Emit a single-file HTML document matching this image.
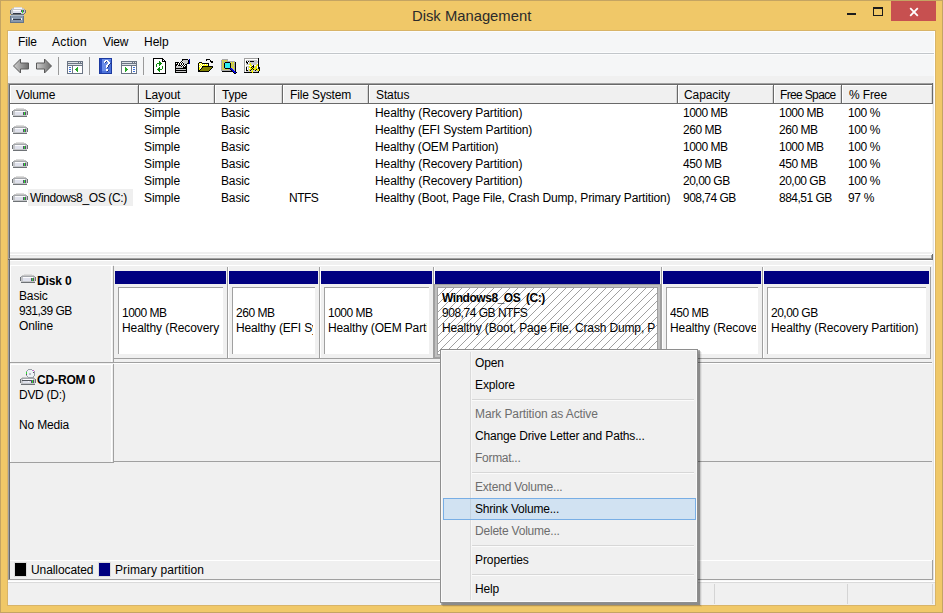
<!DOCTYPE html>
<html><head><meta charset="utf-8">
<style>
*{margin:0;padding:0;box-sizing:border-box}
html,body{width:943px;height:613px;overflow:hidden;background:#f0c868}
body{position:relative;font-family:"Liberation Sans",sans-serif;font-size:12px;letter-spacing:-0.15px;color:#000}
.a{position:absolute}
.t{position:absolute;white-space:nowrap;line-height:15px}
svg{position:absolute;overflow:visible}
</style></head><body>
<div class="a" style="left:0px;top:0px;width:943px;height:1px;background:#c4a462;"></div><div class="a" style="left:0px;top:0px;width:1px;height:613px;background:#c4a462;"></div><div class="a" style="left:942px;top:0px;width:1px;height:613px;background:#c4a462;"></div><div class="a" style="left:0px;top:612px;width:943px;height:1px;background:#c4a462;"></div><svg style="left:10px;top:7px" width="16" height="16" shape-rendering="crispEdges"><rect x="4" y="0" width="8" height="1" fill="#dcdcdc"/><rect x="2" y="1" width="2" height="1" fill="#c6c6c6"/><rect x="4" y="1" width="8" height="1" fill="#fbfbfd"/><rect x="12" y="1" width="2" height="1" fill="#c6c6c6"/><rect x="1" y="2" width="1" height="1" fill="#a4a7ab"/><rect x="2" y="2" width="12" height="1" fill="#c4c6c9"/><rect x="14" y="2" width="1" height="1" fill="#a4a7ab"/><rect x="0" y="3" width="1" height="1" fill="#6e7276"/><rect x="1" y="3" width="2" height="1" fill="#c4c6c9"/><rect x="3" y="3" width="8" height="1" fill="#fbfbfd"/><rect x="11" y="3" width="1" height="1" fill="#5a4a6e"/><rect x="12" y="3" width="1" height="1" fill="#30e030"/><rect x="13" y="3" width="1" height="1" fill="#5a4a6e"/><rect x="14" y="3" width="1" height="1" fill="#c4c6c9"/><rect x="15" y="3" width="1" height="1" fill="#6e7276"/><rect x="0" y="4" width="1" height="1" fill="#6e7276"/><rect x="1" y="4" width="2" height="1" fill="#c4c6c9"/><rect x="3" y="4" width="8" height="1" fill="#dfe1ec"/><rect x="11" y="4" width="1" height="1" fill="#5a4a6e"/><rect x="12" y="4" width="1" height="1" fill="#30e030"/><rect x="13" y="4" width="1" height="1" fill="#5a4a6e"/><rect x="14" y="4" width="1" height="1" fill="#c4c6c9"/><rect x="15" y="4" width="1" height="1" fill="#6e7276"/><rect x="0" y="5" width="1" height="1" fill="#6e7276"/><rect x="1" y="5" width="2" height="1" fill="#c4c6c9"/><rect x="3" y="5" width="9" height="1" fill="#dfe1ec"/><rect x="12" y="5" width="1" height="1" fill="#30e030"/><rect x="13" y="5" width="2" height="1" fill="#c4c6c9"/><rect x="15" y="5" width="1" height="1" fill="#6e7276"/><rect x="0" y="6" width="1" height="1" fill="#6e7276"/><rect x="1" y="6" width="2" height="1" fill="#c4c6c9"/><rect x="3" y="6" width="8" height="1" fill="#303848"/><rect x="11" y="6" width="3" height="1" fill="#c4c6c9"/><rect x="14" y="6" width="1" height="1" fill="#6e7276"/><rect x="1" y="7" width="13" height="1" fill="#6e7276"/><rect x="0" y="8" width="14" height="1" fill="#b0bccb"/><rect x="0" y="9" width="1" height="1" fill="#62748a"/><rect x="1" y="9" width="12" height="1" fill="#8898ac"/><rect x="13" y="9" width="1" height="1" fill="#62748a"/><rect x="0" y="10" width="1" height="1" fill="#62748a"/><rect x="1" y="10" width="12" height="1" fill="#8898ac"/><rect x="13" y="10" width="1" height="1" fill="#62748a"/><rect x="0" y="11" width="1" height="1" fill="#62748a"/><rect x="1" y="11" width="1" height="1" fill="#8898ac"/><rect x="2" y="11" width="1" height="1" fill="#f0f4f8"/><rect x="3" y="11" width="8" height="1" fill="#8898ac"/><rect x="11" y="11" width="1" height="1" fill="#f0f4f8"/><rect x="12" y="11" width="1" height="1" fill="#8898ac"/><rect x="13" y="11" width="1" height="1" fill="#62748a"/><rect x="0" y="12" width="1" height="1" fill="#62748a"/><rect x="1" y="12" width="1" height="1" fill="#8898ac"/><rect x="2" y="12" width="1" height="1" fill="#f0f4f8"/><rect x="3" y="12" width="8" height="1" fill="#303848"/><rect x="11" y="12" width="1" height="1" fill="#f0f4f8"/><rect x="12" y="12" width="1" height="1" fill="#8898ac"/><rect x="13" y="12" width="1" height="1" fill="#62748a"/><rect x="0" y="13" width="1" height="1" fill="#62748a"/><rect x="1" y="13" width="12" height="1" fill="#8898ac"/><rect x="13" y="13" width="1" height="1" fill="#62748a"/><rect x="0" y="14" width="1" height="1" fill="#62748a"/><rect x="1" y="14" width="12" height="1" fill="#8898ac"/><rect x="13" y="14" width="1" height="1" fill="#62748a"/><rect x="0" y="15" width="14" height="1" fill="#62748a"/></svg><div class="t" style="left:412px;top:7px;font-size:14.8px;line-height:18px;color:#2b2b2b;letter-spacing:0">Disk Management</div><div class="a" style="left:891px;top:1px;width:45px;height:20px;background:#c75050;"></div><svg style="left:909px;top:7px" width="10" height="10"><path d="M1.2 1.2L8.8 8.8M8.8 1.2L1.2 8.8" stroke="#fff" stroke-width="1.8"/></svg><div class="a" style="left:847px;top:13px;width:9px;height:2px;background:#1c1c1c;"></div><div class="a" style="left:873px;top:7px;width:10px;height:9px;border:1px solid #1c1c1c;border-top-width:2px"></div><div class="a" style="left:7px;top:30px;width:929px;height:576px;background:#d8b468;"></div><div class="a" style="left:8px;top:31px;width:927px;height:574px;background:#f0f0f0;"></div><div class="a" style="left:8px;top:31px;width:927px;height:45px;background:#f5f6f7;"></div><div class="a" style="left:8px;top:31px;width:927px;height:1px;background:#fbfcfd;"></div><div class="a" style="left:8px;top:31px;width:1px;height:45px;background:#fbfcfd;"></div><div class="a" style="left:8px;top:52px;width:927px;height:1px;background:#fbfcfd;"></div><div class="a" style="left:8px;top:53px;width:927px;height:1px;background:#c2c6ca;"></div><div class="a" style="left:8px;top:54px;width:927px;height:1px;background:#fbfcfd;"></div><div class="t" style="left:18px;top:35px;letter-spacing:-0.1px">File</div><div class="t" style="left:52px;top:35px;letter-spacing:0.25px">Action</div><div class="t" style="left:103px;top:35px;letter-spacing:-0.1px">View</div><div class="t" style="left:144px;top:35px;letter-spacing:0px">Help</div><svg style="left:12px;top:58px" width="18" height="17"><defs><linearGradient id="ag" x1="0" y1="0" x2="1" y2="0"><stop offset="0" stop-color="#d0d0d0"/><stop offset="1" stop-color="#6a6a6a"/></linearGradient></defs><path d="M1.5 8 L8.5 1 V5 H16.5 V11 H8.5 V15 Z" fill="url(#ag)" stroke="#5a5a5a" stroke-linejoin="round"/></svg><svg style="left:35px;top:58px" width="18" height="17"><path d="M16.5 8 L9.5 1 V5 H1.5 V11 H9.5 V15 Z" fill="url(#ag)" stroke="#5a5a5a" stroke-linejoin="round"/></svg><div class="a" style="left:58px;top:57px;width:1px;height:18px;background:#9a9a9a;"></div><div class="a" style="left:89px;top:57px;width:1px;height:18px;background:#9a9a9a;"></div><div class="a" style="left:143px;top:57px;width:1px;height:18px;background:#9a9a9a;"></div><svg style="left:67px;top:61px" width="16" height="13" shape-rendering="crispEdges"><rect x="0" y="0" width="16" height="1" fill="#6b7584"/><rect x="0" y="1" width="1" height="1" fill="#6b7584"/><rect x="1" y="1" width="10" height="1" fill="#dde1e6"/><rect x="11" y="1" width="1" height="1" fill="#6b7584"/><rect x="12" y="1" width="1" height="1" fill="#dde1e6"/><rect x="13" y="1" width="1" height="1" fill="#6b7584"/><rect x="14" y="1" width="1" height="1" fill="#dde1e6"/><rect x="15" y="1" width="1" height="1" fill="#6b7584"/><rect x="0" y="2" width="16" height="1" fill="#6b7584"/><rect x="0" y="3" width="1" height="1" fill="#6b7584"/><rect x="1" y="3" width="14" height="1" fill="#dde1e6"/><rect x="15" y="3" width="1" height="1" fill="#6b7584"/><rect x="0" y="4" width="16" height="1" fill="#6b7584"/><rect x="0" y="5" width="1" height="1" fill="#6b7584"/><rect x="1" y="5" width="4" height="1" fill="#ffffff"/><rect x="5" y="5" width="1" height="1" fill="#6b7584"/><rect x="6" y="5" width="9" height="1" fill="#ffffff"/><rect x="15" y="5" width="1" height="1" fill="#6b7584"/><rect x="0" y="6" width="1" height="1" fill="#6b7584"/><rect x="1" y="6" width="1" height="1" fill="#ffffff"/><rect x="2" y="6" width="2" height="1" fill="#3a6fd8"/><rect x="4" y="6" width="1" height="1" fill="#ffffff"/><rect x="5" y="6" width="1" height="1" fill="#6b7584"/><rect x="6" y="6" width="4" height="1" fill="#ffffff"/><rect x="10" y="6" width="1" height="1" fill="#28a828"/><rect x="11" y="6" width="4" height="1" fill="#ffffff"/><rect x="15" y="6" width="1" height="1" fill="#6b7584"/><rect x="0" y="7" width="1" height="1" fill="#6b7584"/><rect x="1" y="7" width="4" height="1" fill="#ffffff"/><rect x="5" y="7" width="1" height="1" fill="#6b7584"/><rect x="6" y="7" width="3" height="1" fill="#ffffff"/><rect x="9" y="7" width="2" height="1" fill="#28a828"/><rect x="11" y="7" width="4" height="1" fill="#ffffff"/><rect x="15" y="7" width="1" height="1" fill="#6b7584"/><rect x="0" y="8" width="1" height="1" fill="#6b7584"/><rect x="1" y="8" width="1" height="1" fill="#ffffff"/><rect x="2" y="8" width="2" height="1" fill="#3a6fd8"/><rect x="4" y="8" width="1" height="1" fill="#ffffff"/><rect x="5" y="8" width="1" height="1" fill="#6b7584"/><rect x="6" y="8" width="2" height="1" fill="#ffffff"/><rect x="8" y="8" width="3" height="1" fill="#28a828"/><rect x="11" y="8" width="4" height="1" fill="#ffffff"/><rect x="15" y="8" width="1" height="1" fill="#6b7584"/><rect x="0" y="9" width="1" height="1" fill="#6b7584"/><rect x="1" y="9" width="4" height="1" fill="#ffffff"/><rect x="5" y="9" width="1" height="1" fill="#6b7584"/><rect x="6" y="9" width="3" height="1" fill="#ffffff"/><rect x="9" y="9" width="2" height="1" fill="#28a828"/><rect x="11" y="9" width="4" height="1" fill="#ffffff"/><rect x="15" y="9" width="1" height="1" fill="#6b7584"/><rect x="0" y="10" width="1" height="1" fill="#6b7584"/><rect x="1" y="10" width="1" height="1" fill="#ffffff"/><rect x="2" y="10" width="2" height="1" fill="#3a6fd8"/><rect x="4" y="10" width="1" height="1" fill="#ffffff"/><rect x="5" y="10" width="1" height="1" fill="#6b7584"/><rect x="6" y="10" width="4" height="1" fill="#ffffff"/><rect x="10" y="10" width="1" height="1" fill="#28a828"/><rect x="11" y="10" width="4" height="1" fill="#ffffff"/><rect x="15" y="10" width="1" height="1" fill="#6b7584"/><rect x="0" y="11" width="1" height="1" fill="#6b7584"/><rect x="1" y="11" width="4" height="1" fill="#ffffff"/><rect x="5" y="11" width="1" height="1" fill="#6b7584"/><rect x="6" y="11" width="9" height="1" fill="#ffffff"/><rect x="15" y="11" width="1" height="1" fill="#6b7584"/><rect x="0" y="12" width="16" height="1" fill="#6b7584"/></svg><svg style="left:121px;top:61px" width="16" height="13" shape-rendering="crispEdges"><rect x="0" y="0" width="16" height="1" fill="#6b7584"/><rect x="0" y="1" width="1" height="1" fill="#6b7584"/><rect x="1" y="1" width="10" height="1" fill="#dde1e6"/><rect x="11" y="1" width="1" height="1" fill="#6b7584"/><rect x="12" y="1" width="1" height="1" fill="#dde1e6"/><rect x="13" y="1" width="1" height="1" fill="#6b7584"/><rect x="14" y="1" width="1" height="1" fill="#dde1e6"/><rect x="15" y="1" width="1" height="1" fill="#6b7584"/><rect x="0" y="2" width="16" height="1" fill="#6b7584"/><rect x="0" y="3" width="1" height="1" fill="#6b7584"/><rect x="1" y="3" width="14" height="1" fill="#dde1e6"/><rect x="15" y="3" width="1" height="1" fill="#6b7584"/><rect x="0" y="4" width="16" height="1" fill="#6b7584"/><rect x="0" y="5" width="1" height="1" fill="#6b7584"/><rect x="1" y="5" width="9" height="1" fill="#ffffff"/><rect x="10" y="5" width="1" height="1" fill="#6b7584"/><rect x="11" y="5" width="4" height="1" fill="#ffffff"/><rect x="15" y="5" width="1" height="1" fill="#6b7584"/><rect x="0" y="6" width="1" height="1" fill="#6b7584"/><rect x="1" y="6" width="3" height="1" fill="#ffffff"/><rect x="4" y="6" width="1" height="1" fill="#28a828"/><rect x="5" y="6" width="5" height="1" fill="#ffffff"/><rect x="10" y="6" width="1" height="1" fill="#6b7584"/><rect x="11" y="6" width="1" height="1" fill="#ffffff"/><rect x="12" y="6" width="2" height="1" fill="#3a6fd8"/><rect x="14" y="6" width="1" height="1" fill="#ffffff"/><rect x="15" y="6" width="1" height="1" fill="#6b7584"/><rect x="0" y="7" width="1" height="1" fill="#6b7584"/><rect x="1" y="7" width="3" height="1" fill="#ffffff"/><rect x="4" y="7" width="2" height="1" fill="#28a828"/><rect x="6" y="7" width="4" height="1" fill="#ffffff"/><rect x="10" y="7" width="1" height="1" fill="#6b7584"/><rect x="11" y="7" width="4" height="1" fill="#ffffff"/><rect x="15" y="7" width="1" height="1" fill="#6b7584"/><rect x="0" y="8" width="1" height="1" fill="#6b7584"/><rect x="1" y="8" width="3" height="1" fill="#ffffff"/><rect x="4" y="8" width="3" height="1" fill="#28a828"/><rect x="7" y="8" width="3" height="1" fill="#ffffff"/><rect x="10" y="8" width="1" height="1" fill="#6b7584"/><rect x="11" y="8" width="1" height="1" fill="#ffffff"/><rect x="12" y="8" width="2" height="1" fill="#3a6fd8"/><rect x="14" y="8" width="1" height="1" fill="#ffffff"/><rect x="15" y="8" width="1" height="1" fill="#6b7584"/><rect x="0" y="9" width="1" height="1" fill="#6b7584"/><rect x="1" y="9" width="3" height="1" fill="#ffffff"/><rect x="4" y="9" width="2" height="1" fill="#28a828"/><rect x="6" y="9" width="4" height="1" fill="#ffffff"/><rect x="10" y="9" width="1" height="1" fill="#6b7584"/><rect x="11" y="9" width="4" height="1" fill="#ffffff"/><rect x="15" y="9" width="1" height="1" fill="#6b7584"/><rect x="0" y="10" width="1" height="1" fill="#6b7584"/><rect x="1" y="10" width="3" height="1" fill="#ffffff"/><rect x="4" y="10" width="1" height="1" fill="#28a828"/><rect x="5" y="10" width="5" height="1" fill="#ffffff"/><rect x="10" y="10" width="1" height="1" fill="#6b7584"/><rect x="11" y="10" width="1" height="1" fill="#ffffff"/><rect x="12" y="10" width="2" height="1" fill="#3a6fd8"/><rect x="14" y="10" width="1" height="1" fill="#ffffff"/><rect x="15" y="10" width="1" height="1" fill="#6b7584"/><rect x="0" y="11" width="1" height="1" fill="#6b7584"/><rect x="1" y="11" width="9" height="1" fill="#ffffff"/><rect x="10" y="11" width="1" height="1" fill="#6b7584"/><rect x="11" y="11" width="4" height="1" fill="#ffffff"/><rect x="15" y="11" width="1" height="1" fill="#6b7584"/><rect x="0" y="12" width="16" height="1" fill="#6b7584"/></svg><svg style="left:99px;top:58px" width="13" height="16" shape-rendering="crispEdges"><rect x="0" y="0" width="13" height="1" fill="#1c3aa0"/><rect x="0" y="1" width="1" height="1" fill="#1c3aa0"/><rect x="1" y="1" width="2" height="1" fill="#2a4cc0"/><rect x="3" y="1" width="9" height="1" fill="#6c8ee8"/><rect x="12" y="1" width="1" height="1" fill="#1c3aa0"/><rect x="0" y="2" width="1" height="1" fill="#1c3aa0"/><rect x="1" y="2" width="2" height="1" fill="#2a4cc0"/><rect x="3" y="2" width="3" height="1" fill="#6c8ee8"/><rect x="6" y="2" width="3" height="1" fill="#ffffff"/><rect x="9" y="2" width="2" height="1" fill="#6c8ee8"/><rect x="11" y="2" width="1" height="1" fill="#4c72da"/><rect x="12" y="2" width="1" height="1" fill="#1c3aa0"/><rect x="0" y="3" width="1" height="1" fill="#1c3aa0"/><rect x="1" y="3" width="2" height="1" fill="#2a4cc0"/><rect x="3" y="3" width="2" height="1" fill="#6c8ee8"/><rect x="5" y="3" width="2" height="1" fill="#ffffff"/><rect x="7" y="3" width="1" height="1" fill="#2a3a78"/><rect x="8" y="3" width="2" height="1" fill="#ffffff"/><rect x="10" y="3" width="1" height="1" fill="#6c8ee8"/><rect x="11" y="3" width="1" height="1" fill="#4c72da"/><rect x="12" y="3" width="1" height="1" fill="#1c3aa0"/><rect x="0" y="4" width="1" height="1" fill="#1c3aa0"/><rect x="1" y="4" width="2" height="1" fill="#2a4cc0"/><rect x="3" y="4" width="2" height="1" fill="#6c8ee8"/><rect x="5" y="4" width="1" height="1" fill="#ffffff"/><rect x="6" y="4" width="1" height="1" fill="#2a3a78"/><rect x="7" y="4" width="2" height="1" fill="#6c8ee8"/><rect x="9" y="4" width="2" height="1" fill="#ffffff"/><rect x="11" y="4" width="1" height="1" fill="#4c72da"/><rect x="12" y="4" width="1" height="1" fill="#1c3aa0"/><rect x="0" y="5" width="1" height="1" fill="#1c3aa0"/><rect x="1" y="5" width="2" height="1" fill="#2a4cc0"/><rect x="3" y="5" width="6" height="1" fill="#6c8ee8"/><rect x="9" y="5" width="2" height="1" fill="#ffffff"/><rect x="11" y="5" width="1" height="1" fill="#2a3a78"/><rect x="12" y="5" width="1" height="1" fill="#1c3aa0"/><rect x="0" y="6" width="1" height="1" fill="#1c3aa0"/><rect x="1" y="6" width="2" height="1" fill="#2a4cc0"/><rect x="3" y="6" width="5" height="1" fill="#6c8ee8"/><rect x="8" y="6" width="2" height="1" fill="#ffffff"/><rect x="10" y="6" width="1" height="1" fill="#2a3a78"/><rect x="11" y="6" width="1" height="1" fill="#4c72da"/><rect x="12" y="6" width="1" height="1" fill="#1c3aa0"/><rect x="0" y="7" width="1" height="1" fill="#1c3aa0"/><rect x="1" y="7" width="2" height="1" fill="#2a4cc0"/><rect x="3" y="7" width="4" height="1" fill="#6c8ee8"/><rect x="7" y="7" width="2" height="1" fill="#ffffff"/><rect x="9" y="7" width="1" height="1" fill="#2a3a78"/><rect x="10" y="7" width="2" height="1" fill="#4c72da"/><rect x="12" y="7" width="1" height="1" fill="#1c3aa0"/><rect x="0" y="8" width="1" height="1" fill="#1c3aa0"/><rect x="1" y="8" width="2" height="1" fill="#2a4cc0"/><rect x="3" y="8" width="4" height="1" fill="#6c8ee8"/><rect x="7" y="8" width="2" height="1" fill="#ffffff"/><rect x="9" y="8" width="1" height="1" fill="#2a3a78"/><rect x="10" y="8" width="2" height="1" fill="#4c72da"/><rect x="12" y="8" width="1" height="1" fill="#1c3aa0"/><rect x="0" y="9" width="1" height="1" fill="#1c3aa0"/><rect x="1" y="9" width="2" height="1" fill="#2a4cc0"/><rect x="3" y="9" width="4" height="1" fill="#6c8ee8"/><rect x="7" y="9" width="1" height="1" fill="#ffffff"/><rect x="8" y="9" width="1" height="1" fill="#2a3a78"/><rect x="9" y="9" width="3" height="1" fill="#4c72da"/><rect x="12" y="9" width="1" height="1" fill="#1c3aa0"/><rect x="0" y="10" width="1" height="1" fill="#1c3aa0"/><rect x="1" y="10" width="2" height="1" fill="#2a4cc0"/><rect x="3" y="10" width="5" height="1" fill="#6c8ee8"/><rect x="8" y="10" width="4" height="1" fill="#4c72da"/><rect x="12" y="10" width="1" height="1" fill="#1c3aa0"/><rect x="0" y="11" width="1" height="1" fill="#1c3aa0"/><rect x="1" y="11" width="2" height="1" fill="#2a4cc0"/><rect x="3" y="11" width="4" height="1" fill="#6c8ee8"/><rect x="7" y="11" width="2" height="1" fill="#ffffff"/><rect x="9" y="11" width="3" height="1" fill="#4c72da"/><rect x="12" y="11" width="1" height="1" fill="#1c3aa0"/><rect x="0" y="12" width="1" height="1" fill="#1c3aa0"/><rect x="1" y="12" width="2" height="1" fill="#2a4cc0"/><rect x="3" y="12" width="4" height="1" fill="#6c8ee8"/><rect x="7" y="12" width="2" height="1" fill="#ffffff"/><rect x="9" y="12" width="1" height="1" fill="#2a3a78"/><rect x="10" y="12" width="2" height="1" fill="#4c72da"/><rect x="12" y="12" width="1" height="1" fill="#1c3aa0"/><rect x="0" y="13" width="1" height="1" fill="#1c3aa0"/><rect x="1" y="13" width="2" height="1" fill="#2a4cc0"/><rect x="3" y="13" width="5" height="1" fill="#4c72da"/><rect x="8" y="13" width="1" height="1" fill="#2a3a78"/><rect x="9" y="13" width="3" height="1" fill="#4c72da"/><rect x="12" y="13" width="1" height="1" fill="#1c3aa0"/><rect x="0" y="14" width="1" height="1" fill="#1c3aa0"/><rect x="1" y="14" width="2" height="1" fill="#2a4cc0"/><rect x="3" y="14" width="9" height="1" fill="#4c72da"/><rect x="12" y="14" width="1" height="1" fill="#1c3aa0"/><rect x="0" y="15" width="13" height="1" fill="#1c3aa0"/></svg><svg style="left:153px;top:58px" width="13" height="16" shape-rendering="crispEdges"><rect x="0" y="0" width="10" height="1" fill="#000"/><rect x="0" y="1" width="1" height="1" fill="#000"/><rect x="1" y="1" width="8" height="1" fill="#fff"/><rect x="9" y="1" width="2" height="1" fill="#000"/><rect x="0" y="2" width="1" height="1" fill="#000"/><rect x="1" y="2" width="8" height="1" fill="#fff"/><rect x="9" y="2" width="1" height="1" fill="#000"/><rect x="10" y="2" width="1" height="1" fill="#fff"/><rect x="11" y="2" width="1" height="1" fill="#000"/><rect x="0" y="3" width="1" height="1" fill="#000"/><rect x="1" y="3" width="5" height="1" fill="#fff"/><rect x="6" y="3" width="1" height="1" fill="#0a8a0a"/><rect x="7" y="3" width="2" height="1" fill="#fff"/><rect x="9" y="3" width="4" height="1" fill="#000"/><rect x="0" y="4" width="1" height="1" fill="#000"/><rect x="1" y="4" width="5" height="1" fill="#fff"/><rect x="6" y="4" width="2" height="1" fill="#0a8a0a"/><rect x="8" y="4" width="4" height="1" fill="#fff"/><rect x="12" y="4" width="1" height="1" fill="#000"/><rect x="0" y="5" width="1" height="1" fill="#000"/><rect x="1" y="5" width="3" height="1" fill="#fff"/><rect x="4" y="5" width="5" height="1" fill="#0a8a0a"/><rect x="9" y="5" width="3" height="1" fill="#fff"/><rect x="12" y="5" width="1" height="1" fill="#000"/><rect x="0" y="6" width="1" height="1" fill="#000"/><rect x="1" y="6" width="2" height="1" fill="#fff"/><rect x="3" y="6" width="1" height="1" fill="#0a8a0a"/><rect x="4" y="6" width="2" height="1" fill="#fff"/><rect x="6" y="6" width="2" height="1" fill="#0a8a0a"/><rect x="8" y="6" width="4" height="1" fill="#fff"/><rect x="12" y="6" width="1" height="1" fill="#000"/><rect x="0" y="7" width="1" height="1" fill="#000"/><rect x="1" y="7" width="2" height="1" fill="#fff"/><rect x="3" y="7" width="1" height="1" fill="#0a8a0a"/><rect x="4" y="7" width="2" height="1" fill="#fff"/><rect x="6" y="7" width="1" height="1" fill="#0a8a0a"/><rect x="7" y="7" width="5" height="1" fill="#fff"/><rect x="12" y="7" width="1" height="1" fill="#000"/><rect x="0" y="8" width="1" height="1" fill="#000"/><rect x="1" y="8" width="2" height="1" fill="#fff"/><rect x="3" y="8" width="1" height="1" fill="#0a8a0a"/><rect x="4" y="8" width="5" height="1" fill="#fff"/><rect x="9" y="8" width="1" height="1" fill="#0a8a0a"/><rect x="10" y="8" width="2" height="1" fill="#fff"/><rect x="12" y="8" width="1" height="1" fill="#000"/><rect x="0" y="9" width="1" height="1" fill="#000"/><rect x="1" y="9" width="5" height="1" fill="#fff"/><rect x="6" y="9" width="1" height="1" fill="#0a8a0a"/><rect x="7" y="9" width="2" height="1" fill="#fff"/><rect x="9" y="9" width="1" height="1" fill="#0a8a0a"/><rect x="10" y="9" width="2" height="1" fill="#fff"/><rect x="12" y="9" width="1" height="1" fill="#000"/><rect x="0" y="10" width="1" height="1" fill="#000"/><rect x="1" y="10" width="4" height="1" fill="#fff"/><rect x="5" y="10" width="2" height="1" fill="#0a8a0a"/><rect x="7" y="10" width="2" height="1" fill="#fff"/><rect x="9" y="10" width="1" height="1" fill="#0a8a0a"/><rect x="10" y="10" width="2" height="1" fill="#fff"/><rect x="12" y="10" width="1" height="1" fill="#000"/><rect x="0" y="11" width="1" height="1" fill="#000"/><rect x="1" y="11" width="3" height="1" fill="#fff"/><rect x="4" y="11" width="5" height="1" fill="#0a8a0a"/><rect x="9" y="11" width="3" height="1" fill="#fff"/><rect x="12" y="11" width="1" height="1" fill="#000"/><rect x="0" y="12" width="1" height="1" fill="#000"/><rect x="1" y="12" width="4" height="1" fill="#fff"/><rect x="5" y="12" width="2" height="1" fill="#0a8a0a"/><rect x="7" y="12" width="5" height="1" fill="#fff"/><rect x="12" y="12" width="1" height="1" fill="#000"/><rect x="0" y="13" width="1" height="1" fill="#000"/><rect x="1" y="13" width="5" height="1" fill="#fff"/><rect x="6" y="13" width="1" height="1" fill="#0a8a0a"/><rect x="7" y="13" width="5" height="1" fill="#fff"/><rect x="12" y="13" width="1" height="1" fill="#000"/><rect x="0" y="14" width="1" height="1" fill="#000"/><rect x="1" y="14" width="11" height="1" fill="#fff"/><rect x="12" y="14" width="1" height="1" fill="#000"/><rect x="0" y="15" width="13" height="1" fill="#000"/></svg><svg style="left:175px;top:59px" width="15" height="14" shape-rendering="crispEdges"><rect x="7" y="0" width="6" height="1" fill="#000"/><rect x="14" y="0" width="1" height="1" fill="#0000a0"/><rect x="6" y="1" width="1" height="1" fill="#fff"/><rect x="7" y="1" width="1" height="1" fill="#000"/><rect x="8" y="1" width="5" height="1" fill="#c8c8c8"/><rect x="13" y="1" width="1" height="1" fill="#000"/><rect x="14" y="1" width="1" height="1" fill="#0000a0"/><rect x="5" y="2" width="1" height="1" fill="#fff"/><rect x="6" y="2" width="1" height="1" fill="#000"/><rect x="7" y="2" width="1" height="1" fill="#fff"/><rect x="8" y="2" width="5" height="1" fill="#c8c8c8"/><rect x="13" y="2" width="1" height="1" fill="#000"/><rect x="14" y="2" width="1" height="1" fill="#0000a0"/><rect x="0" y="3" width="4" height="1" fill="#000"/><rect x="4" y="3" width="1" height="1" fill="#fff"/><rect x="5" y="3" width="1" height="1" fill="#000"/><rect x="6" y="3" width="1" height="1" fill="#fff"/><rect x="7" y="3" width="1" height="1" fill="#000"/><rect x="8" y="3" width="1" height="1" fill="#fff"/><rect x="9" y="3" width="4" height="1" fill="#c8c8c8"/><rect x="13" y="3" width="1" height="1" fill="#000"/><rect x="14" y="3" width="1" height="1" fill="#0000a0"/><rect x="0" y="4" width="1" height="1" fill="#000"/><rect x="1" y="4" width="1" height="1" fill="#fff"/><rect x="2" y="4" width="1" height="1" fill="#000"/><rect x="3" y="4" width="1" height="1" fill="#fff"/><rect x="4" y="4" width="1" height="1" fill="#000"/><rect x="5" y="4" width="1" height="1" fill="#fff"/><rect x="6" y="4" width="1" height="1" fill="#000"/><rect x="7" y="4" width="1" height="1" fill="#fff"/><rect x="8" y="4" width="1" height="1" fill="#000"/><rect x="9" y="4" width="3" height="1" fill="#c8c8c8"/><rect x="12" y="4" width="2" height="1" fill="#000"/><rect x="14" y="4" width="1" height="1" fill="#0000a0"/><rect x="0" y="5" width="3" height="1" fill="#000"/><rect x="3" y="5" width="1" height="1" fill="#fff"/><rect x="4" y="5" width="1" height="1" fill="#000"/><rect x="5" y="5" width="1" height="1" fill="#fff"/><rect x="6" y="5" width="1" height="1" fill="#000"/><rect x="7" y="5" width="1" height="1" fill="#fff"/><rect x="8" y="5" width="1" height="1" fill="#000"/><rect x="9" y="5" width="1" height="1" fill="#fff"/><rect x="10" y="5" width="2" height="1" fill="#000"/><rect x="0" y="6" width="2" height="1" fill="#000"/><rect x="2" y="6" width="1" height="1" fill="#fff"/><rect x="3" y="6" width="3" height="1" fill="#000"/><rect x="6" y="6" width="1" height="1" fill="#fff"/><rect x="7" y="6" width="1" height="1" fill="#000"/><rect x="8" y="6" width="1" height="1" fill="#fff"/><rect x="9" y="6" width="1" height="1" fill="#000"/><rect x="10" y="6" width="1" height="1" fill="#fff"/><rect x="11" y="6" width="1" height="1" fill="#000"/><rect x="0" y="7" width="1" height="1" fill="#000"/><rect x="1" y="7" width="5" height="1" fill="#c8c8c8"/><rect x="6" y="7" width="1" height="1" fill="#000"/><rect x="7" y="7" width="1" height="1" fill="#fff"/><rect x="8" y="7" width="1" height="1" fill="#000"/><rect x="9" y="7" width="1" height="1" fill="#fff"/><rect x="10" y="7" width="2" height="1" fill="#000"/><rect x="0" y="8" width="1" height="1" fill="#000"/><rect x="1" y="8" width="7" height="1" fill="#c8c8c8"/><rect x="8" y="8" width="4" height="1" fill="#000"/><rect x="0" y="9" width="12" height="1" fill="#000"/><rect x="0" y="10" width="1" height="1" fill="#000"/><rect x="1" y="10" width="10" height="1" fill="#c8c8c8"/><rect x="11" y="10" width="1" height="1" fill="#000"/><rect x="0" y="11" width="12" height="1" fill="#000"/><rect x="0" y="12" width="1" height="1" fill="#000"/><rect x="1" y="12" width="10" height="1" fill="#c8c8c8"/><rect x="11" y="12" width="1" height="1" fill="#000"/><rect x="0" y="13" width="12" height="1" fill="#000"/></svg><svg style="left:198px;top:59px" width="16" height="13" shape-rendering="crispEdges"><rect x="8" y="0" width="4" height="1" fill="#000"/><rect x="8" y="1" width="1" height="1" fill="#000"/><rect x="12" y="1" width="1" height="1" fill="#000"/><rect x="12" y="2" width="3" height="1" fill="#000"/><rect x="1" y="3" width="3" height="1" fill="#000"/><rect x="13" y="3" width="2" height="1" fill="#000"/><rect x="0" y="4" width="1" height="1" fill="#000"/><rect x="1" y="4" width="1" height="1" fill="#ffff00"/><rect x="2" y="4" width="1" height="1" fill="#ffffff"/><rect x="3" y="4" width="1" height="1" fill="#ffff00"/><rect x="4" y="4" width="7" height="1" fill="#000"/><rect x="0" y="5" width="1" height="1" fill="#000"/><rect x="1" y="5" width="1" height="1" fill="#ffffff"/><rect x="2" y="5" width="1" height="1" fill="#ffff00"/><rect x="3" y="5" width="1" height="1" fill="#ffffff"/><rect x="4" y="5" width="1" height="1" fill="#ffff00"/><rect x="5" y="5" width="1" height="1" fill="#ffffff"/><rect x="6" y="5" width="1" height="1" fill="#ffff00"/><rect x="7" y="5" width="1" height="1" fill="#ffffff"/><rect x="8" y="5" width="1" height="1" fill="#ffff00"/><rect x="9" y="5" width="1" height="1" fill="#ffffff"/><rect x="10" y="5" width="1" height="1" fill="#000"/><rect x="0" y="6" width="1" height="1" fill="#000"/><rect x="1" y="6" width="1" height="1" fill="#ffff00"/><rect x="2" y="6" width="1" height="1" fill="#ffffff"/><rect x="3" y="6" width="1" height="1" fill="#ffff00"/><rect x="4" y="6" width="1" height="1" fill="#ffffff"/><rect x="5" y="6" width="5" height="1" fill="#ffff00"/><rect x="10" y="6" width="1" height="1" fill="#000"/><rect x="0" y="7" width="1" height="1" fill="#000"/><rect x="1" y="7" width="1" height="1" fill="#ffffff"/><rect x="2" y="7" width="1" height="1" fill="#ffff00"/><rect x="3" y="7" width="1" height="1" fill="#ffffff"/><rect x="4" y="7" width="11" height="1" fill="#000"/><rect x="0" y="8" width="1" height="1" fill="#000"/><rect x="1" y="8" width="1" height="1" fill="#ffff00"/><rect x="2" y="8" width="1" height="1" fill="#ffffff"/><rect x="3" y="8" width="1" height="1" fill="#ffff00"/><rect x="4" y="8" width="1" height="1" fill="#000"/><rect x="5" y="8" width="9" height="1" fill="#808000"/><rect x="14" y="8" width="1" height="1" fill="#000"/><rect x="0" y="9" width="1" height="1" fill="#000"/><rect x="1" y="9" width="1" height="1" fill="#ffff00"/><rect x="2" y="9" width="1" height="1" fill="#ffffff"/><rect x="3" y="9" width="1" height="1" fill="#000"/><rect x="4" y="9" width="9" height="1" fill="#808000"/><rect x="13" y="9" width="1" height="1" fill="#000"/><rect x="0" y="10" width="1" height="1" fill="#000"/><rect x="1" y="10" width="1" height="1" fill="#ffff00"/><rect x="2" y="10" width="1" height="1" fill="#000"/><rect x="3" y="10" width="9" height="1" fill="#808000"/><rect x="12" y="10" width="1" height="1" fill="#000"/><rect x="0" y="11" width="2" height="1" fill="#000"/><rect x="2" y="11" width="9" height="1" fill="#808000"/><rect x="11" y="11" width="1" height="1" fill="#000"/><rect x="0" y="12" width="11" height="1" fill="#000"/></svg><svg style="left:221px;top:59px" width="16" height="15" shape-rendering="crispEdges"><rect x="1" y="0" width="6" height="1" fill="#a8a8a8"/><rect x="0" y="1" width="1" height="1" fill="#a8a8a8"/><rect x="1" y="1" width="1" height="1" fill="#f0f000"/><rect x="2" y="1" width="1" height="1" fill="#a8a8a8"/><rect x="3" y="1" width="1" height="1" fill="#f0f000"/><rect x="4" y="1" width="1" height="1" fill="#a8a8a8"/><rect x="5" y="1" width="1" height="1" fill="#f0f000"/><rect x="6" y="1" width="1" height="1" fill="#a8a8a8"/><rect x="0" y="2" width="2" height="1" fill="#a8a8a8"/><rect x="2" y="2" width="1" height="1" fill="#f0f000"/><rect x="3" y="2" width="1" height="1" fill="#a8a8a8"/><rect x="4" y="2" width="1" height="1" fill="#f0f000"/><rect x="5" y="2" width="9" height="1" fill="#a8a8a8"/><rect x="0" y="3" width="1" height="1" fill="#a8a8a8"/><rect x="1" y="3" width="1" height="1" fill="#f0f000"/><rect x="2" y="3" width="2" height="1" fill="#a8a8a8"/><rect x="4" y="3" width="5" height="1" fill="#000"/><rect x="9" y="3" width="1" height="1" fill="#a8a8a8"/><rect x="10" y="3" width="1" height="1" fill="#f0f000"/><rect x="11" y="3" width="1" height="1" fill="#a8a8a8"/><rect x="12" y="3" width="1" height="1" fill="#f0f000"/><rect x="13" y="3" width="1" height="1" fill="#a8a8a8"/><rect x="14" y="3" width="1" height="1" fill="#000"/><rect x="0" y="4" width="2" height="1" fill="#a8a8a8"/><rect x="2" y="4" width="1" height="1" fill="#f0f000"/><rect x="3" y="4" width="1" height="1" fill="#000"/><rect x="4" y="4" width="5" height="1" fill="#30f0f0"/><rect x="9" y="4" width="1" height="1" fill="#000"/><rect x="10" y="4" width="1" height="1" fill="#f0f000"/><rect x="11" y="4" width="1" height="1" fill="#a8a8a8"/><rect x="12" y="4" width="1" height="1" fill="#f0f000"/><rect x="13" y="4" width="1" height="1" fill="#a8a8a8"/><rect x="14" y="4" width="1" height="1" fill="#000"/><rect x="0" y="5" width="1" height="1" fill="#a8a8a8"/><rect x="1" y="5" width="1" height="1" fill="#f0f000"/><rect x="2" y="5" width="1" height="1" fill="#a8a8a8"/><rect x="3" y="5" width="1" height="1" fill="#000"/><rect x="4" y="5" width="5" height="1" fill="#30f0f0"/><rect x="9" y="5" width="1" height="1" fill="#000"/><rect x="10" y="5" width="1" height="1" fill="#a8a8a8"/><rect x="11" y="5" width="1" height="1" fill="#f0f000"/><rect x="12" y="5" width="2" height="1" fill="#a8a8a8"/><rect x="14" y="5" width="1" height="1" fill="#000"/><rect x="0" y="6" width="2" height="1" fill="#a8a8a8"/><rect x="2" y="6" width="1" height="1" fill="#f0f000"/><rect x="3" y="6" width="1" height="1" fill="#000"/><rect x="4" y="6" width="5" height="1" fill="#30f0f0"/><rect x="9" y="6" width="1" height="1" fill="#000"/><rect x="10" y="6" width="1" height="1" fill="#f0f000"/><rect x="11" y="6" width="1" height="1" fill="#a8a8a8"/><rect x="12" y="6" width="1" height="1" fill="#f0f000"/><rect x="13" y="6" width="1" height="1" fill="#a8a8a8"/><rect x="14" y="6" width="1" height="1" fill="#000"/><rect x="0" y="7" width="1" height="1" fill="#a8a8a8"/><rect x="1" y="7" width="1" height="1" fill="#f0f000"/><rect x="2" y="7" width="1" height="1" fill="#a8a8a8"/><rect x="3" y="7" width="1" height="1" fill="#000"/><rect x="4" y="7" width="5" height="1" fill="#30f0f0"/><rect x="9" y="7" width="1" height="1" fill="#000"/><rect x="10" y="7" width="1" height="1" fill="#a8a8a8"/><rect x="11" y="7" width="1" height="1" fill="#f0f000"/><rect x="12" y="7" width="2" height="1" fill="#a8a8a8"/><rect x="14" y="7" width="1" height="1" fill="#000"/><rect x="0" y="8" width="2" height="1" fill="#a8a8a8"/><rect x="2" y="8" width="1" height="1" fill="#f0f000"/><rect x="3" y="8" width="1" height="1" fill="#000"/><rect x="4" y="8" width="5" height="1" fill="#30f0f0"/><rect x="9" y="8" width="1" height="1" fill="#000"/><rect x="10" y="8" width="1" height="1" fill="#f0f000"/><rect x="11" y="8" width="1" height="1" fill="#a8a8a8"/><rect x="12" y="8" width="1" height="1" fill="#f0f000"/><rect x="13" y="8" width="1" height="1" fill="#a8a8a8"/><rect x="14" y="8" width="1" height="1" fill="#000"/><rect x="0" y="9" width="1" height="1" fill="#a8a8a8"/><rect x="1" y="9" width="1" height="1" fill="#f0f000"/><rect x="2" y="9" width="2" height="1" fill="#a8a8a8"/><rect x="4" y="9" width="5" height="1" fill="#000"/><rect x="9" y="9" width="2" height="1" fill="#0000f0"/><rect x="11" y="9" width="1" height="1" fill="#a8a8a8"/><rect x="12" y="9" width="1" height="1" fill="#f0f000"/><rect x="13" y="9" width="1" height="1" fill="#a8a8a8"/><rect x="14" y="9" width="1" height="1" fill="#000"/><rect x="0" y="10" width="2" height="1" fill="#a8a8a8"/><rect x="2" y="10" width="1" height="1" fill="#f0f000"/><rect x="3" y="10" width="1" height="1" fill="#a8a8a8"/><rect x="4" y="10" width="1" height="1" fill="#f0f000"/><rect x="5" y="10" width="1" height="1" fill="#a8a8a8"/><rect x="6" y="10" width="1" height="1" fill="#f0f000"/><rect x="7" y="10" width="2" height="1" fill="#a8a8a8"/><rect x="9" y="10" width="1" height="1" fill="#000"/><rect x="10" y="10" width="2" height="1" fill="#0000f0"/><rect x="12" y="10" width="2" height="1" fill="#a8a8a8"/><rect x="14" y="10" width="1" height="1" fill="#000"/><rect x="0" y="11" width="10" height="1" fill="#a8a8a8"/><rect x="10" y="11" width="1" height="1" fill="#000"/><rect x="11" y="11" width="2" height="1" fill="#0000f0"/><rect x="13" y="11" width="1" height="1" fill="#a8a8a8"/><rect x="14" y="11" width="1" height="1" fill="#000"/><rect x="1" y="12" width="11" height="1" fill="#000"/><rect x="12" y="12" width="2" height="1" fill="#0000f0"/><rect x="14" y="12" width="1" height="1" fill="#000"/><rect x="12" y="13" width="1" height="1" fill="#000"/><rect x="13" y="13" width="2" height="1" fill="#0000f0"/><rect x="15" y="13" width="1" height="1" fill="#000"/><rect x="13" y="14" width="2" height="1" fill="#000"/></svg><svg style="left:244px;top:58px" width="16" height="15" shape-rendering="crispEdges"><rect x="0" y="0" width="14" height="1" fill="#a0a0a0"/><rect x="14" y="0" width="1" height="1" fill="#000"/><rect x="0" y="1" width="1" height="1" fill="#a0a0a0"/><rect x="1" y="1" width="13" height="1" fill="#fff"/><rect x="14" y="1" width="1" height="1" fill="#000"/><rect x="0" y="2" width="1" height="1" fill="#a0a0a0"/><rect x="1" y="2" width="1" height="1" fill="#fff"/><rect x="2" y="2" width="11" height="1" fill="#c8c8c8"/><rect x="13" y="2" width="1" height="1" fill="#fff"/><rect x="14" y="2" width="1" height="1" fill="#000"/><rect x="0" y="3" width="1" height="1" fill="#a0a0a0"/><rect x="1" y="3" width="1" height="1" fill="#fff"/><rect x="2" y="3" width="1" height="1" fill="#000"/><rect x="3" y="3" width="1" height="1" fill="#fff"/><rect x="4" y="3" width="1" height="1" fill="#000"/><rect x="5" y="3" width="1" height="1" fill="#c8c8c8"/><rect x="6" y="3" width="4" height="1" fill="#000"/><rect x="10" y="3" width="4" height="1" fill="#c8c8c8"/><rect x="14" y="3" width="1" height="1" fill="#000"/><rect x="0" y="4" width="1" height="1" fill="#a0a0a0"/><rect x="1" y="4" width="1" height="1" fill="#fff"/><rect x="2" y="4" width="2" height="1" fill="#000"/><rect x="4" y="4" width="1" height="1" fill="#fff"/><rect x="5" y="4" width="9" height="1" fill="#c8c8c8"/><rect x="14" y="4" width="1" height="1" fill="#000"/><rect x="0" y="5" width="1" height="1" fill="#a0a0a0"/><rect x="1" y="5" width="1" height="1" fill="#fff"/><rect x="2" y="5" width="1" height="1" fill="#c8c8c8"/><rect x="3" y="5" width="1" height="1" fill="#000"/><rect x="4" y="5" width="1" height="1" fill="#fff"/><rect x="5" y="5" width="1" height="1" fill="#c8c8c8"/><rect x="6" y="5" width="1" height="1" fill="#f0f000"/><rect x="7" y="5" width="6" height="1" fill="#c8c8c8"/><rect x="13" y="5" width="1" height="1" fill="#fff"/><rect x="14" y="5" width="1" height="1" fill="#000"/><rect x="0" y="6" width="1" height="1" fill="#a0a0a0"/><rect x="1" y="6" width="1" height="1" fill="#fff"/><rect x="2" y="6" width="3" height="1" fill="#c8c8c8"/><rect x="5" y="6" width="2" height="1" fill="#f0f000"/><rect x="7" y="6" width="6" height="1" fill="#c8c8c8"/><rect x="13" y="6" width="1" height="1" fill="#f0f000"/><rect x="14" y="6" width="1" height="1" fill="#000"/><rect x="0" y="7" width="1" height="1" fill="#a0a0a0"/><rect x="1" y="7" width="5" height="1" fill="#fff"/><rect x="6" y="7" width="2" height="1" fill="#f0f000"/><rect x="8" y="7" width="1" height="1" fill="#fff"/><rect x="9" y="7" width="1" height="1" fill="#000"/><rect x="10" y="7" width="2" height="1" fill="#fff"/><rect x="12" y="7" width="2" height="1" fill="#f0f000"/><rect x="14" y="7" width="1" height="1" fill="#000"/><rect x="0" y="8" width="1" height="1" fill="#a0a0a0"/><rect x="1" y="8" width="1" height="1" fill="#fff"/><rect x="2" y="8" width="3" height="1" fill="#c8c8c8"/><rect x="5" y="8" width="1" height="1" fill="#f0f000"/><rect x="6" y="8" width="1" height="1" fill="#fff"/><rect x="7" y="8" width="1" height="1" fill="#f0f000"/><rect x="8" y="8" width="2" height="1" fill="#000"/><rect x="10" y="8" width="1" height="1" fill="#c8c8c8"/><rect x="11" y="8" width="2" height="1" fill="#f0f000"/><rect x="13" y="8" width="1" height="1" fill="#fff"/><rect x="14" y="8" width="1" height="1" fill="#000"/><rect x="0" y="9" width="1" height="1" fill="#a0a0a0"/><rect x="1" y="9" width="1" height="1" fill="#fff"/><rect x="2" y="9" width="1" height="1" fill="#000"/><rect x="3" y="9" width="1" height="1" fill="#fff"/><rect x="4" y="9" width="1" height="1" fill="#c8c8c8"/><rect x="5" y="9" width="2" height="1" fill="#f0f000"/><rect x="7" y="9" width="1" height="1" fill="#000"/><rect x="8" y="9" width="1" height="1" fill="#f0f000"/><rect x="9" y="9" width="1" height="1" fill="#000"/><rect x="10" y="9" width="1" height="1" fill="#c8c8c8"/><rect x="11" y="9" width="2" height="1" fill="#f0f000"/><rect x="13" y="9" width="1" height="1" fill="#fff"/><rect x="14" y="9" width="2" height="1" fill="#000"/><rect x="0" y="10" width="1" height="1" fill="#a0a0a0"/><rect x="1" y="10" width="1" height="1" fill="#fff"/><rect x="2" y="10" width="1" height="1" fill="#000"/><rect x="3" y="10" width="1" height="1" fill="#fff"/><rect x="4" y="10" width="1" height="1" fill="#c8c8c8"/><rect x="5" y="10" width="1" height="1" fill="#fff"/><rect x="6" y="10" width="2" height="1" fill="#f0f000"/><rect x="8" y="10" width="1" height="1" fill="#000"/><rect x="9" y="10" width="4" height="1" fill="#f0f000"/><rect x="13" y="10" width="1" height="1" fill="#c8c8c8"/><rect x="14" y="10" width="2" height="1" fill="#000"/><rect x="0" y="11" width="1" height="1" fill="#a0a0a0"/><rect x="1" y="11" width="1" height="1" fill="#fff"/><rect x="2" y="11" width="1" height="1" fill="#000"/><rect x="3" y="11" width="1" height="1" fill="#fff"/><rect x="4" y="11" width="1" height="1" fill="#c8c8c8"/><rect x="5" y="11" width="2" height="1" fill="#f0f000"/><rect x="7" y="11" width="1" height="1" fill="#000"/><rect x="8" y="11" width="1" height="1" fill="#f0f000"/><rect x="9" y="11" width="1" height="1" fill="#000"/><rect x="10" y="11" width="2" height="1" fill="#f0f000"/><rect x="12" y="11" width="1" height="1" fill="#000"/><rect x="13" y="11" width="2" height="1" fill="#f0f000"/><rect x="15" y="11" width="1" height="1" fill="#000"/><rect x="0" y="12" width="1" height="1" fill="#a0a0a0"/><rect x="1" y="12" width="1" height="1" fill="#fff"/><rect x="2" y="12" width="2" height="1" fill="#000"/><rect x="4" y="12" width="1" height="1" fill="#c8c8c8"/><rect x="5" y="12" width="1" height="1" fill="#f0f000"/><rect x="6" y="12" width="1" height="1" fill="#000"/><rect x="7" y="12" width="1" height="1" fill="#c8c8c8"/><rect x="8" y="12" width="1" height="1" fill="#f0f000"/><rect x="9" y="12" width="2" height="1" fill="#c8c8c8"/><rect x="11" y="12" width="1" height="1" fill="#000"/><rect x="12" y="12" width="1" height="1" fill="#c8c8c8"/><rect x="13" y="12" width="2" height="1" fill="#f0f000"/><rect x="15" y="12" width="1" height="1" fill="#000"/><rect x="0" y="13" width="1" height="1" fill="#a0a0a0"/><rect x="1" y="13" width="1" height="1" fill="#fff"/><rect x="2" y="13" width="5" height="1" fill="#c8c8c8"/><rect x="7" y="13" width="2" height="1" fill="#f0f000"/><rect x="9" y="13" width="5" height="1" fill="#c8c8c8"/><rect x="14" y="13" width="1" height="1" fill="#000"/><rect x="0" y="14" width="8" height="1" fill="#000"/><rect x="8" y="14" width="1" height="1" fill="#f0f000"/><rect x="9" y="14" width="6" height="1" fill="#000"/></svg><div class="a" style="left:8px;top:83px;width:926px;height:1px;background:#a0a0a0;"></div><div class="a" style="left:8px;top:83px;width:1px;height:178px;background:#a0a0a0;"></div><div class="a" style="left:9px;top:84px;width:924px;height:1px;background:#696969;"></div><div class="a" style="left:9px;top:84px;width:1px;height:176px;background:#696969;"></div><div class="a" style="left:10px;top:85px;width:922px;height:167px;background:#fff;"></div><div class="a" style="left:932px;top:83px;width:1px;height:2px;background:#696969;"></div><div class="a" style="left:933px;top:83px;width:1px;height:1px;background:#a0a0a0;"></div><div class="a" style="left:10px;top:252px;width:922px;height:2px;background:#efefef;"></div><div class="a" style="left:10px;top:254px;width:922px;height:1px;background:#fff;"></div><div class="a" style="left:10px;top:255px;width:922px;height:1px;background:#e6e6e6;"></div><div class="a" style="left:10px;top:256px;width:922px;height:2px;background:#f0f0f0;"></div><div class="a" style="left:8px;top:258px;width:925px;height:1px;background:#a0a0a0;"></div><div class="a" style="left:8px;top:259px;width:925px;height:1px;background:#696969;"></div><div class="a" style="left:931px;top:255px;width:1px;height:4px;background:#a0a0a0;"></div><div class="a" style="left:932px;top:254px;width:1px;height:6px;background:#696969;"></div><div class="a" style="left:932px;top:85px;width:1px;height:169px;background:#f4f4f4;"></div><div class="a" style="left:10px;top:85px;width:129px;height:18px;background:#f0f0f0;"></div><div class="a" style="left:10px;top:85px;width:129px;height:1px;background:#fff;"></div><div class="a" style="left:10px;top:85px;width:1px;height:18px;background:#fff;"></div><div class="a" style="left:137px;top:86px;width:1px;height:17px;background:#d5d5d5;"></div><div class="a" style="left:138px;top:85px;width:1px;height:19px;background:#696969;"></div><div class="t" style="left:16px;top:88px;letter-spacing:-0.125px;">Volume</div><div class="a" style="left:139px;top:85px;width:76px;height:18px;background:#f0f0f0;"></div><div class="a" style="left:139px;top:85px;width:76px;height:1px;background:#fff;"></div><div class="a" style="left:139px;top:85px;width:1px;height:18px;background:#fff;"></div><div class="a" style="left:213px;top:86px;width:1px;height:17px;background:#d5d5d5;"></div><div class="a" style="left:214px;top:85px;width:1px;height:19px;background:#696969;"></div><div class="t" style="left:145px;top:88px;letter-spacing:-0.125px;">Layout</div><div class="a" style="left:215px;top:85px;width:68px;height:18px;background:#f0f0f0;"></div><div class="a" style="left:215px;top:85px;width:68px;height:1px;background:#fff;"></div><div class="a" style="left:215px;top:85px;width:1px;height:18px;background:#fff;"></div><div class="a" style="left:281px;top:86px;width:1px;height:17px;background:#d5d5d5;"></div><div class="a" style="left:282px;top:85px;width:1px;height:19px;background:#696969;"></div><div class="t" style="left:222px;top:88px;letter-spacing:-0.163px;">Type</div><div class="a" style="left:283px;top:85px;width:86px;height:18px;background:#f0f0f0;"></div><div class="a" style="left:283px;top:85px;width:86px;height:1px;background:#fff;"></div><div class="a" style="left:283px;top:85px;width:1px;height:18px;background:#fff;"></div><div class="a" style="left:367px;top:86px;width:1px;height:17px;background:#d5d5d5;"></div><div class="a" style="left:368px;top:85px;width:1px;height:19px;background:#696969;"></div><div class="t" style="left:290px;top:88px;letter-spacing:-0.132px;">File System</div><div class="a" style="left:369px;top:85px;width:309px;height:18px;background:#f0f0f0;"></div><div class="a" style="left:369px;top:85px;width:309px;height:1px;background:#fff;"></div><div class="a" style="left:369px;top:85px;width:1px;height:18px;background:#fff;"></div><div class="a" style="left:676px;top:86px;width:1px;height:17px;background:#d5d5d5;"></div><div class="a" style="left:677px;top:85px;width:1px;height:19px;background:#696969;"></div><div class="t" style="left:376px;top:88px;letter-spacing:-0.125px;">Status</div><div class="a" style="left:678px;top:85px;width:96px;height:18px;background:#f0f0f0;"></div><div class="a" style="left:678px;top:85px;width:96px;height:1px;background:#fff;"></div><div class="a" style="left:678px;top:85px;width:1px;height:18px;background:#fff;"></div><div class="a" style="left:772px;top:86px;width:1px;height:17px;background:#d5d5d5;"></div><div class="a" style="left:773px;top:85px;width:1px;height:19px;background:#696969;"></div><div class="t" style="left:684px;top:88px;letter-spacing:-0.106px;">Capacity</div><div class="a" style="left:774px;top:85px;width:68px;height:18px;background:#f0f0f0;"></div><div class="a" style="left:774px;top:85px;width:68px;height:1px;background:#fff;"></div><div class="a" style="left:774px;top:85px;width:1px;height:18px;background:#fff;"></div><div class="a" style="left:840px;top:86px;width:1px;height:17px;background:#d5d5d5;"></div><div class="a" style="left:841px;top:85px;width:1px;height:19px;background:#696969;"></div><div class="t" style="left:780px;top:88px;letter-spacing:-0.65px">Free Space</div><div class="a" style="left:842px;top:85px;width:91px;height:18px;background:#f0f0f0;"></div><div class="a" style="left:842px;top:85px;width:91px;height:1px;background:#fff;"></div><div class="a" style="left:842px;top:85px;width:1px;height:18px;background:#fff;"></div><div class="a" style="left:931px;top:86px;width:1px;height:17px;background:#d5d5d5;"></div><div class="a" style="left:932px;top:85px;width:1px;height:19px;background:#696969;"></div><div class="t" style="left:849px;top:88px;letter-spacing:-0.125px;">% Free</div><div class="a" style="left:10px;top:103px;width:922px;height:1px;background:#696969;"></div><svg style="left:12px;top:108px" width="16" height="9" shape-rendering="crispEdges"><rect x="4" y="0" width="8" height="1" fill="#dcdcdc"/><rect x="2" y="1" width="12" height="1" fill="#c6c6c6"/><rect x="1" y="2" width="14" height="1" fill="#a4a7ab"/><rect x="0" y="3" width="1" height="1" fill="#6e7276"/><rect x="1" y="3" width="2" height="1" fill="#c4c6c9"/><rect x="3" y="3" width="10" height="1" fill="#fbfbfd"/><rect x="13" y="3" width="2" height="1" fill="#c4c6c9"/><rect x="15" y="3" width="1" height="1" fill="#6e7276"/><rect x="0" y="4" width="1" height="1" fill="#6e7276"/><rect x="1" y="4" width="2" height="1" fill="#c4c6c9"/><rect x="3" y="4" width="8" height="1" fill="#dfe1ec"/><rect x="11" y="4" width="1" height="1" fill="#5a4a6e"/><rect x="12" y="4" width="1" height="1" fill="#30e030"/><rect x="13" y="4" width="1" height="1" fill="#5a4a6e"/><rect x="14" y="4" width="1" height="1" fill="#c4c6c9"/><rect x="15" y="4" width="1" height="1" fill="#6e7276"/><rect x="0" y="5" width="1" height="1" fill="#6e7276"/><rect x="1" y="5" width="2" height="1" fill="#c4c6c9"/><rect x="3" y="5" width="8" height="1" fill="#dfe1ec"/><rect x="11" y="5" width="1" height="1" fill="#5a4a6e"/><rect x="12" y="5" width="1" height="1" fill="#30e030"/><rect x="13" y="5" width="1" height="1" fill="#5a4a6e"/><rect x="14" y="5" width="1" height="1" fill="#c4c6c9"/><rect x="15" y="5" width="1" height="1" fill="#6e7276"/><rect x="0" y="6" width="1" height="1" fill="#6e7276"/><rect x="1" y="6" width="2" height="1" fill="#c4c6c9"/><rect x="3" y="6" width="8" height="1" fill="#dfe1ec"/><rect x="11" y="6" width="1" height="1" fill="#5a4a6e"/><rect x="12" y="6" width="1" height="1" fill="#30e030"/><rect x="13" y="6" width="1" height="1" fill="#5a4a6e"/><rect x="14" y="6" width="1" height="1" fill="#c4c6c9"/><rect x="15" y="6" width="1" height="1" fill="#6e7276"/><rect x="1" y="7" width="14" height="1" fill="#c4c6c9"/><rect x="1" y="8" width="14" height="1" fill="#6e7276"/></svg><div class="t" style="left:144px;top:106px;letter-spacing:-0.125px;">Simple</div><div class="t" style="left:221px;top:106px;letter-spacing:-0.140px;">Basic</div><div class="t" style="left:375px;top:106px;letter-spacing:-0.098px;">Healthy (Recovery Partition)</div><div class="t" style="left:683px;top:106px;letter-spacing:-0.493px;">1000 MB</div><div class="t" style="left:779px;top:106px;letter-spacing:-0.493px;">1000 MB</div><div class="t" style="left:848px;top:106px;letter-spacing:-0.380px;">100 %</div><svg style="left:12px;top:125px" width="16" height="9" shape-rendering="crispEdges"><rect x="4" y="0" width="8" height="1" fill="#dcdcdc"/><rect x="2" y="1" width="12" height="1" fill="#c6c6c6"/><rect x="1" y="2" width="14" height="1" fill="#a4a7ab"/><rect x="0" y="3" width="1" height="1" fill="#6e7276"/><rect x="1" y="3" width="2" height="1" fill="#c4c6c9"/><rect x="3" y="3" width="10" height="1" fill="#fbfbfd"/><rect x="13" y="3" width="2" height="1" fill="#c4c6c9"/><rect x="15" y="3" width="1" height="1" fill="#6e7276"/><rect x="0" y="4" width="1" height="1" fill="#6e7276"/><rect x="1" y="4" width="2" height="1" fill="#c4c6c9"/><rect x="3" y="4" width="8" height="1" fill="#dfe1ec"/><rect x="11" y="4" width="1" height="1" fill="#5a4a6e"/><rect x="12" y="4" width="1" height="1" fill="#30e030"/><rect x="13" y="4" width="1" height="1" fill="#5a4a6e"/><rect x="14" y="4" width="1" height="1" fill="#c4c6c9"/><rect x="15" y="4" width="1" height="1" fill="#6e7276"/><rect x="0" y="5" width="1" height="1" fill="#6e7276"/><rect x="1" y="5" width="2" height="1" fill="#c4c6c9"/><rect x="3" y="5" width="8" height="1" fill="#dfe1ec"/><rect x="11" y="5" width="1" height="1" fill="#5a4a6e"/><rect x="12" y="5" width="1" height="1" fill="#30e030"/><rect x="13" y="5" width="1" height="1" fill="#5a4a6e"/><rect x="14" y="5" width="1" height="1" fill="#c4c6c9"/><rect x="15" y="5" width="1" height="1" fill="#6e7276"/><rect x="0" y="6" width="1" height="1" fill="#6e7276"/><rect x="1" y="6" width="2" height="1" fill="#c4c6c9"/><rect x="3" y="6" width="8" height="1" fill="#dfe1ec"/><rect x="11" y="6" width="1" height="1" fill="#5a4a6e"/><rect x="12" y="6" width="1" height="1" fill="#30e030"/><rect x="13" y="6" width="1" height="1" fill="#5a4a6e"/><rect x="14" y="6" width="1" height="1" fill="#c4c6c9"/><rect x="15" y="6" width="1" height="1" fill="#6e7276"/><rect x="1" y="7" width="14" height="1" fill="#c4c6c9"/><rect x="1" y="8" width="14" height="1" fill="#6e7276"/></svg><div class="t" style="left:144px;top:123px;letter-spacing:-0.125px;">Simple</div><div class="t" style="left:221px;top:123px;letter-spacing:-0.140px;">Basic</div><div class="t" style="left:375px;top:123px;letter-spacing:-0.140px;">Healthy (EFI System Partition)</div><div class="t" style="left:683px;top:123px;letter-spacing:-0.475px;">260 MB</div><div class="t" style="left:779px;top:123px;letter-spacing:-0.475px;">260 MB</div><div class="t" style="left:848px;top:123px;letter-spacing:-0.380px;">100 %</div><svg style="left:12px;top:142px" width="16" height="9" shape-rendering="crispEdges"><rect x="4" y="0" width="8" height="1" fill="#dcdcdc"/><rect x="2" y="1" width="12" height="1" fill="#c6c6c6"/><rect x="1" y="2" width="14" height="1" fill="#a4a7ab"/><rect x="0" y="3" width="1" height="1" fill="#6e7276"/><rect x="1" y="3" width="2" height="1" fill="#c4c6c9"/><rect x="3" y="3" width="10" height="1" fill="#fbfbfd"/><rect x="13" y="3" width="2" height="1" fill="#c4c6c9"/><rect x="15" y="3" width="1" height="1" fill="#6e7276"/><rect x="0" y="4" width="1" height="1" fill="#6e7276"/><rect x="1" y="4" width="2" height="1" fill="#c4c6c9"/><rect x="3" y="4" width="8" height="1" fill="#dfe1ec"/><rect x="11" y="4" width="1" height="1" fill="#5a4a6e"/><rect x="12" y="4" width="1" height="1" fill="#30e030"/><rect x="13" y="4" width="1" height="1" fill="#5a4a6e"/><rect x="14" y="4" width="1" height="1" fill="#c4c6c9"/><rect x="15" y="4" width="1" height="1" fill="#6e7276"/><rect x="0" y="5" width="1" height="1" fill="#6e7276"/><rect x="1" y="5" width="2" height="1" fill="#c4c6c9"/><rect x="3" y="5" width="8" height="1" fill="#dfe1ec"/><rect x="11" y="5" width="1" height="1" fill="#5a4a6e"/><rect x="12" y="5" width="1" height="1" fill="#30e030"/><rect x="13" y="5" width="1" height="1" fill="#5a4a6e"/><rect x="14" y="5" width="1" height="1" fill="#c4c6c9"/><rect x="15" y="5" width="1" height="1" fill="#6e7276"/><rect x="0" y="6" width="1" height="1" fill="#6e7276"/><rect x="1" y="6" width="2" height="1" fill="#c4c6c9"/><rect x="3" y="6" width="8" height="1" fill="#dfe1ec"/><rect x="11" y="6" width="1" height="1" fill="#5a4a6e"/><rect x="12" y="6" width="1" height="1" fill="#30e030"/><rect x="13" y="6" width="1" height="1" fill="#5a4a6e"/><rect x="14" y="6" width="1" height="1" fill="#c4c6c9"/><rect x="15" y="6" width="1" height="1" fill="#6e7276"/><rect x="1" y="7" width="14" height="1" fill="#c4c6c9"/><rect x="1" y="8" width="14" height="1" fill="#6e7276"/></svg><div class="t" style="left:144px;top:140px;letter-spacing:-0.125px;">Simple</div><div class="t" style="left:221px;top:140px;letter-spacing:-0.140px;">Basic</div><div class="t" style="left:375px;top:140px;letter-spacing:-0.148px;">Healthy (OEM Partition)</div><div class="t" style="left:683px;top:140px;letter-spacing:-0.493px;">1000 MB</div><div class="t" style="left:779px;top:140px;letter-spacing:-0.493px;">1000 MB</div><div class="t" style="left:848px;top:140px;letter-spacing:-0.380px;">100 %</div><svg style="left:12px;top:159px" width="16" height="9" shape-rendering="crispEdges"><rect x="4" y="0" width="8" height="1" fill="#dcdcdc"/><rect x="2" y="1" width="12" height="1" fill="#c6c6c6"/><rect x="1" y="2" width="14" height="1" fill="#a4a7ab"/><rect x="0" y="3" width="1" height="1" fill="#6e7276"/><rect x="1" y="3" width="2" height="1" fill="#c4c6c9"/><rect x="3" y="3" width="10" height="1" fill="#fbfbfd"/><rect x="13" y="3" width="2" height="1" fill="#c4c6c9"/><rect x="15" y="3" width="1" height="1" fill="#6e7276"/><rect x="0" y="4" width="1" height="1" fill="#6e7276"/><rect x="1" y="4" width="2" height="1" fill="#c4c6c9"/><rect x="3" y="4" width="8" height="1" fill="#dfe1ec"/><rect x="11" y="4" width="1" height="1" fill="#5a4a6e"/><rect x="12" y="4" width="1" height="1" fill="#30e030"/><rect x="13" y="4" width="1" height="1" fill="#5a4a6e"/><rect x="14" y="4" width="1" height="1" fill="#c4c6c9"/><rect x="15" y="4" width="1" height="1" fill="#6e7276"/><rect x="0" y="5" width="1" height="1" fill="#6e7276"/><rect x="1" y="5" width="2" height="1" fill="#c4c6c9"/><rect x="3" y="5" width="8" height="1" fill="#dfe1ec"/><rect x="11" y="5" width="1" height="1" fill="#5a4a6e"/><rect x="12" y="5" width="1" height="1" fill="#30e030"/><rect x="13" y="5" width="1" height="1" fill="#5a4a6e"/><rect x="14" y="5" width="1" height="1" fill="#c4c6c9"/><rect x="15" y="5" width="1" height="1" fill="#6e7276"/><rect x="0" y="6" width="1" height="1" fill="#6e7276"/><rect x="1" y="6" width="2" height="1" fill="#c4c6c9"/><rect x="3" y="6" width="8" height="1" fill="#dfe1ec"/><rect x="11" y="6" width="1" height="1" fill="#5a4a6e"/><rect x="12" y="6" width="1" height="1" fill="#30e030"/><rect x="13" y="6" width="1" height="1" fill="#5a4a6e"/><rect x="14" y="6" width="1" height="1" fill="#c4c6c9"/><rect x="15" y="6" width="1" height="1" fill="#6e7276"/><rect x="1" y="7" width="14" height="1" fill="#c4c6c9"/><rect x="1" y="8" width="14" height="1" fill="#6e7276"/></svg><div class="t" style="left:144px;top:157px;letter-spacing:-0.125px;">Simple</div><div class="t" style="left:221px;top:157px;letter-spacing:-0.140px;">Basic</div><div class="t" style="left:375px;top:157px;letter-spacing:-0.098px;">Healthy (Recovery Partition)</div><div class="t" style="left:683px;top:157px;letter-spacing:-0.475px;">450 MB</div><div class="t" style="left:779px;top:157px;letter-spacing:-0.475px;">450 MB</div><div class="t" style="left:848px;top:157px;letter-spacing:-0.380px;">100 %</div><svg style="left:12px;top:176px" width="16" height="9" shape-rendering="crispEdges"><rect x="4" y="0" width="8" height="1" fill="#dcdcdc"/><rect x="2" y="1" width="12" height="1" fill="#c6c6c6"/><rect x="1" y="2" width="14" height="1" fill="#a4a7ab"/><rect x="0" y="3" width="1" height="1" fill="#6e7276"/><rect x="1" y="3" width="2" height="1" fill="#c4c6c9"/><rect x="3" y="3" width="10" height="1" fill="#fbfbfd"/><rect x="13" y="3" width="2" height="1" fill="#c4c6c9"/><rect x="15" y="3" width="1" height="1" fill="#6e7276"/><rect x="0" y="4" width="1" height="1" fill="#6e7276"/><rect x="1" y="4" width="2" height="1" fill="#c4c6c9"/><rect x="3" y="4" width="8" height="1" fill="#dfe1ec"/><rect x="11" y="4" width="1" height="1" fill="#5a4a6e"/><rect x="12" y="4" width="1" height="1" fill="#30e030"/><rect x="13" y="4" width="1" height="1" fill="#5a4a6e"/><rect x="14" y="4" width="1" height="1" fill="#c4c6c9"/><rect x="15" y="4" width="1" height="1" fill="#6e7276"/><rect x="0" y="5" width="1" height="1" fill="#6e7276"/><rect x="1" y="5" width="2" height="1" fill="#c4c6c9"/><rect x="3" y="5" width="8" height="1" fill="#dfe1ec"/><rect x="11" y="5" width="1" height="1" fill="#5a4a6e"/><rect x="12" y="5" width="1" height="1" fill="#30e030"/><rect x="13" y="5" width="1" height="1" fill="#5a4a6e"/><rect x="14" y="5" width="1" height="1" fill="#c4c6c9"/><rect x="15" y="5" width="1" height="1" fill="#6e7276"/><rect x="0" y="6" width="1" height="1" fill="#6e7276"/><rect x="1" y="6" width="2" height="1" fill="#c4c6c9"/><rect x="3" y="6" width="8" height="1" fill="#dfe1ec"/><rect x="11" y="6" width="1" height="1" fill="#5a4a6e"/><rect x="12" y="6" width="1" height="1" fill="#30e030"/><rect x="13" y="6" width="1" height="1" fill="#5a4a6e"/><rect x="14" y="6" width="1" height="1" fill="#c4c6c9"/><rect x="15" y="6" width="1" height="1" fill="#6e7276"/><rect x="1" y="7" width="14" height="1" fill="#c4c6c9"/><rect x="1" y="8" width="14" height="1" fill="#6e7276"/></svg><div class="t" style="left:144px;top:174px;letter-spacing:-0.125px;">Simple</div><div class="t" style="left:221px;top:174px;letter-spacing:-0.140px;">Basic</div><div class="t" style="left:375px;top:174px;letter-spacing:-0.098px;">Healthy (Recovery Partition)</div><div class="t" style="left:683px;top:174px;letter-spacing:-0.506px;">20,00 GB</div><div class="t" style="left:779px;top:174px;letter-spacing:-0.506px;">20,00 GB</div><div class="t" style="left:848px;top:174px;letter-spacing:-0.380px;">100 %</div><svg style="left:12px;top:193px" width="16" height="9" shape-rendering="crispEdges"><rect x="4" y="0" width="8" height="1" fill="#dcdcdc"/><rect x="2" y="1" width="12" height="1" fill="#c6c6c6"/><rect x="1" y="2" width="14" height="1" fill="#a4a7ab"/><rect x="0" y="3" width="1" height="1" fill="#6e7276"/><rect x="1" y="3" width="2" height="1" fill="#c4c6c9"/><rect x="3" y="3" width="10" height="1" fill="#fbfbfd"/><rect x="13" y="3" width="2" height="1" fill="#c4c6c9"/><rect x="15" y="3" width="1" height="1" fill="#6e7276"/><rect x="0" y="4" width="1" height="1" fill="#6e7276"/><rect x="1" y="4" width="2" height="1" fill="#c4c6c9"/><rect x="3" y="4" width="8" height="1" fill="#dfe1ec"/><rect x="11" y="4" width="1" height="1" fill="#5a4a6e"/><rect x="12" y="4" width="1" height="1" fill="#30e030"/><rect x="13" y="4" width="1" height="1" fill="#5a4a6e"/><rect x="14" y="4" width="1" height="1" fill="#c4c6c9"/><rect x="15" y="4" width="1" height="1" fill="#6e7276"/><rect x="0" y="5" width="1" height="1" fill="#6e7276"/><rect x="1" y="5" width="2" height="1" fill="#c4c6c9"/><rect x="3" y="5" width="8" height="1" fill="#dfe1ec"/><rect x="11" y="5" width="1" height="1" fill="#5a4a6e"/><rect x="12" y="5" width="1" height="1" fill="#30e030"/><rect x="13" y="5" width="1" height="1" fill="#5a4a6e"/><rect x="14" y="5" width="1" height="1" fill="#c4c6c9"/><rect x="15" y="5" width="1" height="1" fill="#6e7276"/><rect x="0" y="6" width="1" height="1" fill="#6e7276"/><rect x="1" y="6" width="2" height="1" fill="#c4c6c9"/><rect x="3" y="6" width="8" height="1" fill="#dfe1ec"/><rect x="11" y="6" width="1" height="1" fill="#5a4a6e"/><rect x="12" y="6" width="1" height="1" fill="#30e030"/><rect x="13" y="6" width="1" height="1" fill="#5a4a6e"/><rect x="14" y="6" width="1" height="1" fill="#c4c6c9"/><rect x="15" y="6" width="1" height="1" fill="#6e7276"/><rect x="1" y="7" width="14" height="1" fill="#c4c6c9"/><rect x="1" y="8" width="14" height="1" fill="#6e7276"/></svg><div class="a" style="left:28px;top:189px;width:105px;height:17px;background:#efefef;"></div><div class="t" style="left:30px;top:191px;letter-spacing:-0.37px">Windows8_OS (C:)</div><div class="t" style="left:144px;top:191px;letter-spacing:-0.125px;">Simple</div><div class="t" style="left:221px;top:191px;letter-spacing:-0.140px;">Basic</div><div class="t" style="left:289px;top:191px;letter-spacing:-0.500px;">NTFS</div><div class="t" style="left:375px;top:191px;letter-spacing:-0.144px;">Healthy (Boot, Page File, Crash Dump, Primary Partition)</div><div class="t" style="left:683px;top:191px;letter-spacing:-0.517px;">908,74 GB</div><div class="t" style="left:779px;top:191px;letter-spacing:-0.517px;">884,51 GB</div><div class="t" style="left:848px;top:191px;letter-spacing:-0.325px;">97 %</div><div class="a" style="left:8px;top:260px;width:926px;height:320px;background:#f0f0f0;"></div><div class="a" style="left:8px;top:260px;width:1px;height:320px;background:#a0a0a0;"></div><div class="a" style="left:9px;top:260px;width:1px;height:320px;background:#696969;"></div><div class="a" style="left:10px;top:260px;width:922px;height:1px;background:#fff;"></div><div class="a" style="left:933px;top:83px;width:1px;height:498px;background:#e3e3e3;"></div><div class="a" style="left:934px;top:31px;width:1px;height:574px;background:#fff;"></div><div class="a" style="left:10px;top:265px;width:103px;height:1px;background:#fff;"></div><div class="a" style="left:10px;top:265px;width:1px;height:98px;background:#fff;"></div><div class="a" style="left:111px;top:266px;width:1px;height:97px;background:#fff;"></div><div class="a" style="left:113px;top:266px;width:1px;height:97px;background:#a0a0a0;"></div><div class="a" style="left:10px;top:362px;width:103px;height:1px;background:#a0a0a0;"></div><div class="a" style="left:114px;top:265px;width:818px;height:1px;background:#fff;"></div><div class="a" style="left:114px;top:358px;width:817px;height:1px;background:#a0a0a0;"></div><div class="a" style="left:930px;top:267px;width:1px;height:92px;background:#a0a0a0;"></div><div class="a" style="left:114px;top:362px;width:818px;height:1px;background:#a0a0a0;"></div><div class="a" style="left:114px;top:363px;width:818px;height:1px;background:#fff;"></div><div class="a" style="left:10px;top:364px;width:103px;height:1px;background:#fff;"></div><div class="a" style="left:10px;top:364px;width:1px;height:99px;background:#fff;"></div><div class="a" style="left:111px;top:365px;width:1px;height:97px;background:#fff;"></div><div class="a" style="left:113px;top:364px;width:1px;height:99px;background:#a0a0a0;"></div><div class="a" style="left:10px;top:462px;width:104px;height:1px;background:#a0a0a0;"></div><div class="a" style="left:114px;top:461px;width:818px;height:1px;background:#a0a0a0;"></div><svg style="left:20px;top:274px" width="16" height="9" shape-rendering="crispEdges"><rect x="4" y="0" width="8" height="1" fill="#dcdcdc"/><rect x="2" y="1" width="12" height="1" fill="#c6c6c6"/><rect x="1" y="2" width="14" height="1" fill="#a4a7ab"/><rect x="0" y="3" width="1" height="1" fill="#6e7276"/><rect x="1" y="3" width="2" height="1" fill="#c4c6c9"/><rect x="3" y="3" width="10" height="1" fill="#fbfbfd"/><rect x="13" y="3" width="2" height="1" fill="#c4c6c9"/><rect x="15" y="3" width="1" height="1" fill="#6e7276"/><rect x="0" y="4" width="1" height="1" fill="#6e7276"/><rect x="1" y="4" width="2" height="1" fill="#c4c6c9"/><rect x="3" y="4" width="8" height="1" fill="#dfe1ec"/><rect x="11" y="4" width="1" height="1" fill="#5a4a6e"/><rect x="12" y="4" width="1" height="1" fill="#30e030"/><rect x="13" y="4" width="1" height="1" fill="#5a4a6e"/><rect x="14" y="4" width="1" height="1" fill="#c4c6c9"/><rect x="15" y="4" width="1" height="1" fill="#6e7276"/><rect x="0" y="5" width="1" height="1" fill="#6e7276"/><rect x="1" y="5" width="2" height="1" fill="#c4c6c9"/><rect x="3" y="5" width="8" height="1" fill="#dfe1ec"/><rect x="11" y="5" width="1" height="1" fill="#5a4a6e"/><rect x="12" y="5" width="1" height="1" fill="#30e030"/><rect x="13" y="5" width="1" height="1" fill="#5a4a6e"/><rect x="14" y="5" width="1" height="1" fill="#c4c6c9"/><rect x="15" y="5" width="1" height="1" fill="#6e7276"/><rect x="0" y="6" width="1" height="1" fill="#6e7276"/><rect x="1" y="6" width="2" height="1" fill="#c4c6c9"/><rect x="3" y="6" width="8" height="1" fill="#dfe1ec"/><rect x="11" y="6" width="1" height="1" fill="#5a4a6e"/><rect x="12" y="6" width="1" height="1" fill="#30e030"/><rect x="13" y="6" width="1" height="1" fill="#5a4a6e"/><rect x="14" y="6" width="1" height="1" fill="#c4c6c9"/><rect x="15" y="6" width="1" height="1" fill="#6e7276"/><rect x="1" y="7" width="14" height="1" fill="#c4c6c9"/><rect x="1" y="8" width="14" height="1" fill="#6e7276"/></svg><div class="t" style="left:37px;top:274px;font-weight:bold">Disk 0</div><div class="t" style="left:19px;top:289px;letter-spacing:-0.140px;">Basic</div><div class="t" style="left:19px;top:304px;letter-spacing:-0.517px;">931,39 GB</div><div class="t" style="left:19px;top:319px;letter-spacing:-0.125px;">Online</div><svg style="left:20px;top:369px" width="16" height="16" shape-rendering="crispEdges"><rect x="8" y="0" width="4" height="1" fill="#9aa0a6"/><rect x="7" y="1" width="1" height="1" fill="#9aa0a6"/><rect x="8" y="1" width="4" height="1" fill="#eef2f6"/><rect x="12" y="1" width="1" height="1" fill="#9aa0a6"/><rect x="13" y="1" width="1" height="1" fill="#e040e0"/><rect x="6" y="2" width="1" height="1" fill="#9aa0a6"/><rect x="7" y="2" width="7" height="1" fill="#eef2f6"/><rect x="14" y="2" width="1" height="1" fill="#9aa0a6"/><rect x="6" y="3" width="1" height="1" fill="#30e030"/><rect x="7" y="3" width="6" height="1" fill="#eef2f6"/><rect x="13" y="3" width="1" height="1" fill="#5a4a6e"/><rect x="14" y="3" width="1" height="1" fill="#9aa0a6"/><rect x="6" y="4" width="1" height="1" fill="#30e030"/><rect x="7" y="4" width="2" height="1" fill="#eef2f6"/><rect x="9" y="4" width="2" height="1" fill="#b8c0c8"/><rect x="11" y="4" width="3" height="1" fill="#eef2f6"/><rect x="14" y="4" width="1" height="1" fill="#9aa0a6"/><rect x="6" y="5" width="1" height="1" fill="#5a4a6e"/><rect x="7" y="5" width="2" height="1" fill="#eef2f6"/><rect x="9" y="5" width="2" height="1" fill="#b8c0c8"/><rect x="11" y="5" width="3" height="1" fill="#eef2f6"/><rect x="14" y="5" width="1" height="1" fill="#9aa0a6"/><rect x="6" y="6" width="1" height="1" fill="#9aa0a6"/><rect x="7" y="6" width="7" height="1" fill="#eef2f6"/><rect x="14" y="6" width="1" height="1" fill="#9aa0a6"/><rect x="7" y="7" width="1" height="1" fill="#9aa0a6"/><rect x="8" y="7" width="5" height="1" fill="#eef2f6"/><rect x="13" y="7" width="1" height="1" fill="#9aa0a6"/><rect x="2" y="8" width="6" height="1" fill="#c6c6c6"/><rect x="8" y="8" width="6" height="1" fill="#9aa0a6"/><rect x="1" y="9" width="14" height="1" fill="#a4a7ab"/><rect x="0" y="10" width="1" height="1" fill="#6e7276"/><rect x="1" y="10" width="2" height="1" fill="#c4c6c9"/><rect x="3" y="10" width="10" height="1" fill="#fbfbfd"/><rect x="13" y="10" width="2" height="1" fill="#c4c6c9"/><rect x="15" y="10" width="1" height="1" fill="#6e7276"/><rect x="0" y="11" width="1" height="1" fill="#6e7276"/><rect x="1" y="11" width="1" height="1" fill="#c4c6c9"/><rect x="2" y="11" width="9" height="1" fill="#50545a"/><rect x="11" y="11" width="1" height="1" fill="#5a4a6e"/><rect x="12" y="11" width="1" height="1" fill="#30e030"/><rect x="13" y="11" width="1" height="1" fill="#5a4a6e"/><rect x="14" y="11" width="1" height="1" fill="#c4c6c9"/><rect x="15" y="11" width="1" height="1" fill="#6e7276"/><rect x="0" y="12" width="1" height="1" fill="#6e7276"/><rect x="1" y="12" width="2" height="1" fill="#c4c6c9"/><rect x="3" y="12" width="5" height="1" fill="#dfe1ec"/><rect x="8" y="12" width="1" height="1" fill="#fbfbfd"/><rect x="9" y="12" width="2" height="1" fill="#dfe1ec"/><rect x="11" y="12" width="1" height="1" fill="#5a4a6e"/><rect x="12" y="12" width="1" height="1" fill="#30e030"/><rect x="13" y="12" width="1" height="1" fill="#5a4a6e"/><rect x="14" y="12" width="1" height="1" fill="#c4c6c9"/><rect x="15" y="12" width="1" height="1" fill="#6e7276"/><rect x="0" y="13" width="1" height="1" fill="#6e7276"/><rect x="1" y="13" width="2" height="1" fill="#c4c6c9"/><rect x="3" y="13" width="8" height="1" fill="#dfe1ec"/><rect x="11" y="13" width="1" height="1" fill="#5a4a6e"/><rect x="12" y="13" width="1" height="1" fill="#30e030"/><rect x="13" y="13" width="1" height="1" fill="#5a4a6e"/><rect x="14" y="13" width="1" height="1" fill="#c4c6c9"/><rect x="15" y="13" width="1" height="1" fill="#6e7276"/><rect x="1" y="14" width="14" height="1" fill="#c4c6c9"/><rect x="1" y="15" width="14" height="1" fill="#6e7276"/></svg><div class="t" style="left:37px;top:373px;font-weight:bold">CD-ROM 0</div><div class="t" style="left:19px;top:388px;letter-spacing:-0.275px;">DVD (D:)</div><div class="t" style="left:19px;top:418px;letter-spacing:-0.163px;">No Media</div><div class="a" style="left:113px;top:267px;width:1px;height:96px;background:#a0a0a0;"></div><div class="a" style="left:115px;top:271px;width:111px;height:13px;background:#000080;"></div><div class="a" style="left:118px;top:287px;width:105px;height:67px;background:#fff;"></div><div class="a" style="left:118px;top:287px;width:105px;height:1px;background:#a0a0a0;"></div><div class="a" style="left:118px;top:287px;width:1px;height:67px;background:#a0a0a0;"></div><div class="a" style="left:122px;top:291px;width:99px;height:60px;overflow:hidden"><div class="t" style="left:0;top:15px;letter-spacing:-0.493px">1000 MB</div><div class="t" style="left:0;top:30px;letter-spacing:-0.098px">Healthy (Recovery Partition)</div></div><div class="a" style="left:229px;top:271px;width:89px;height:13px;background:#000080;"></div><div class="a" style="left:227px;top:267px;width:1px;height:91px;background:#a0a0a0;"></div><div class="a" style="left:228px;top:267px;width:1px;height:91px;background:#fff;"></div><div class="a" style="left:232px;top:287px;width:83px;height:67px;background:#fff;"></div><div class="a" style="left:232px;top:287px;width:83px;height:1px;background:#a0a0a0;"></div><div class="a" style="left:232px;top:287px;width:1px;height:67px;background:#a0a0a0;"></div><div class="a" style="left:236px;top:291px;width:77px;height:60px;overflow:hidden"><div class="t" style="left:0;top:15px;letter-spacing:-0.475px">260 MB</div><div class="t" style="left:0;top:30px;letter-spacing:-0.140px">Healthy (EFI System Partition)</div></div><div class="a" style="left:321px;top:271px;width:111px;height:13px;background:#000080;"></div><div class="a" style="left:319px;top:267px;width:1px;height:91px;background:#a0a0a0;"></div><div class="a" style="left:320px;top:267px;width:1px;height:91px;background:#fff;"></div><div class="a" style="left:324px;top:287px;width:105px;height:67px;background:#fff;"></div><div class="a" style="left:324px;top:287px;width:105px;height:1px;background:#a0a0a0;"></div><div class="a" style="left:324px;top:287px;width:1px;height:67px;background:#a0a0a0;"></div><div class="a" style="left:328px;top:291px;width:99px;height:60px;overflow:hidden"><div class="t" style="left:0;top:15px;letter-spacing:-0.493px">1000 MB</div><div class="t" style="left:0;top:30px;letter-spacing:-0.148px">Healthy (OEM Partition)</div></div><div class="a" style="left:435px;top:271px;width:225px;height:13px;background:#000080;"></div><div class="a" style="left:433px;top:267px;width:1px;height:91px;background:#a0a0a0;"></div><div class="a" style="left:434px;top:267px;width:1px;height:91px;background:#fff;"></div><div class="a" style="left:434px;top:284px;width:227px;height:74px;background:#a0a0a0;"></div><div class="a" style="left:435px;top:285px;width:225px;height:72px;background:#c0c0c0;"></div><div class="a" style="left:437px;top:287px;width:221px;height:68px;background:#a0a0a0;"></div><svg style="left:438px;top:288px" width="219" height="66" shape-rendering="crispEdges"><defs><pattern id="hat" width="8" height="8" patternUnits="userSpaceOnUse"><rect width="8" height="8" fill="#fff"/><rect x="7" y="0" width="1" height="1" fill="#a0a0a0"/><rect x="6" y="1" width="1" height="1" fill="#a0a0a0"/><rect x="5" y="2" width="1" height="1" fill="#a0a0a0"/><rect x="4" y="3" width="1" height="1" fill="#a0a0a0"/><rect x="3" y="4" width="1" height="1" fill="#a0a0a0"/><rect x="2" y="5" width="1" height="1" fill="#a0a0a0"/><rect x="1" y="6" width="1" height="1" fill="#a0a0a0"/><rect x="0" y="7" width="1" height="1" fill="#a0a0a0"/></pattern></defs><rect width="219" height="66" fill="url(#hat)"/></svg><div class="a" style="left:442px;top:291px;width:213px;height:60px;overflow:hidden"><div class="t" style="left:0;top:0;font-weight:bold;letter-spacing:-0.45px">Windows8_OS&nbsp; (C:)</div><div class="t" style="left:0;top:15px;letter-spacing:-0.479px">908,74 GB NTFS</div><div class="t" style="left:0;top:30px;letter-spacing:-0.144px">Healthy (Boot, Page File, Crash Dump, Primary Partition)</div></div><div class="a" style="left:663px;top:271px;width:98px;height:13px;background:#000080;"></div><div class="a" style="left:661px;top:267px;width:1px;height:91px;background:#a0a0a0;"></div><div class="a" style="left:662px;top:267px;width:1px;height:91px;background:#fff;"></div><div class="a" style="left:666px;top:287px;width:92px;height:67px;background:#fff;"></div><div class="a" style="left:666px;top:287px;width:92px;height:1px;background:#a0a0a0;"></div><div class="a" style="left:666px;top:287px;width:1px;height:67px;background:#a0a0a0;"></div><div class="a" style="left:670px;top:291px;width:86px;height:60px;overflow:hidden"><div class="t" style="left:0;top:15px;letter-spacing:-0.475px">450 MB</div><div class="t" style="left:0;top:30px;letter-spacing:-0.098px">Healthy (Recovery Partition)</div></div><div class="a" style="left:764px;top:271px;width:165px;height:13px;background:#000080;"></div><div class="a" style="left:762px;top:267px;width:1px;height:91px;background:#a0a0a0;"></div><div class="a" style="left:763px;top:267px;width:1px;height:91px;background:#fff;"></div><div class="a" style="left:767px;top:287px;width:159px;height:67px;background:#fff;"></div><div class="a" style="left:767px;top:287px;width:159px;height:1px;background:#a0a0a0;"></div><div class="a" style="left:767px;top:287px;width:1px;height:67px;background:#a0a0a0;"></div><div class="a" style="left:771px;top:291px;width:153px;height:60px;overflow:hidden"><div class="t" style="left:0;top:15px;letter-spacing:-0.506px">20,00 GB</div><div class="t" style="left:0;top:30px;letter-spacing:-0.098px">Healthy (Recovery Partition)</div></div><div class="a" style="left:10px;top:560px;width:922px;height:1px;background:#fff;"></div><div class="a" style="left:10px;top:561px;width:922px;height:18px;background:#f0f0f0;"></div><div class="a" style="left:932px;top:560px;width:1px;height:20px;background:#a0a0a0;"></div><div class="a" style="left:8px;top:579px;width:925px;height:1px;background:#a0a0a0;"></div><div class="a" style="left:8px;top:580px;width:927px;height:1px;background:#f8f8f8;"></div><div class="a" style="left:8px;top:581px;width:927px;height:1px;background:#fff;"></div><div class="a" style="left:8px;top:582px;width:927px;height:1px;background:#dadada;"></div><div class="a" style="left:14px;top:562px;width:13px;height:15px;background:#dcdcdc;"></div><div class="a" style="left:15px;top:563px;width:11px;height:13px;background:#000;"></div><div class="t" style="left:31px;top:563px;letter-spacing:-0.091px;">Unallocated</div><div class="a" style="left:98px;top:562px;width:13px;height:15px;background:#dcdcdc;"></div><div class="a" style="left:99px;top:563px;width:11px;height:13px;background:#000080;"></div><div class="t" style="left:115px;top:563px;letter-spacing:0.1px">Primary partition</div><div class="a" style="left:8px;top:583px;width:927px;height:22px;background:#f0f0f0;"></div><div class="a" style="left:714px;top:584px;width:1px;height:20px;background:#d4d4d4;"></div><div class="a" style="left:847px;top:584px;width:1px;height:20px;background:#d4d4d4;"></div><div class="a" style="left:932px;top:584px;width:1px;height:20px;background:#d4d4d4;"></div><div class="a" style="left:443px;top:352px;width:259px;height:255px;background:rgba(0,0,0,0.05);"></div><div class="a" style="left:442px;top:351px;width:259px;height:255px;background:rgba(0,0,0,0.12);"></div><div class="a" style="left:441px;top:350px;width:259px;height:255px;background:rgba(0,0,0,0.30);"></div><div class="a" style="left:440px;top:349px;width:258px;height:254px;background:#8e8e8e;"></div><div class="a" style="left:441px;top:350px;width:256px;height:252px;background:#fafafa;"></div><div class="a" style="left:442px;top:351px;width:254px;height:250px;background:#f0f0f0;"></div><div class="a" style="left:470px;top:352px;width:1px;height:248px;background:#dadada;"></div><div class="a" style="left:471px;top:352px;width:1px;height:248px;background:#f7f7f7;"></div><div class="t" style="left:475px;top:356px;letter-spacing:-0.163px;color:#000">Open</div><div class="t" style="left:475px;top:378px;letter-spacing:-0.114px;color:#000">Explore</div><div class="a" style="left:472px;top:399px;width:222px;height:1px;background:#d7d7d7;"></div><div class="a" style="left:472px;top:400px;width:222px;height:1px;background:#fbfbfb;"></div><div class="t" style="left:475px;top:407px;letter-spacing:-0.106px;color:#6d6d6d">Mark Partition as Active</div><div class="t" style="left:475px;top:429px;letter-spacing:-0.158px;color:#000">Change Drive Letter and Paths...</div><div class="t" style="left:475px;top:451px;letter-spacing:-0.283px;color:#6d6d6d">Format...</div><div class="a" style="left:472px;top:472px;width:222px;height:1px;background:#d7d7d7;"></div><div class="a" style="left:472px;top:473px;width:222px;height:1px;background:#fbfbfb;"></div><div class="t" style="left:475px;top:480px;letter-spacing:-0.209px;color:#6d6d6d">Extend Volume...</div><div class="a" style="left:443px;top:498px;width:253px;height:22px;background:#78aee5;"></div><div class="a" style="left:444px;top:499px;width:251px;height:20px;background:#d1e2f2;"></div><div class="a" style="left:470px;top:499px;width:1px;height:20px;background:rgba(0,0,0,0.07);"></div><div class="t" style="left:475px;top:502px;letter-spacing:-0.209px;color:#000">Shrink Volume...</div><div class="t" style="left:475px;top:524px;letter-spacing:-0.209px;color:#6d6d6d">Delete Volume...</div><div class="a" style="left:472px;top:545px;width:222px;height:1px;background:#d7d7d7;"></div><div class="a" style="left:472px;top:546px;width:222px;height:1px;background:#fbfbfb;"></div><div class="t" style="left:475px;top:553px;letter-spacing:-0.095px;color:#000">Properties</div><div class="a" style="left:472px;top:574px;width:222px;height:1px;background:#d7d7d7;"></div><div class="a" style="left:472px;top:575px;width:222px;height:1px;background:#fbfbfb;"></div><div class="t" style="left:475px;top:582px;letter-spacing:-0.163px;color:#000">Help</div>
</body></html>
